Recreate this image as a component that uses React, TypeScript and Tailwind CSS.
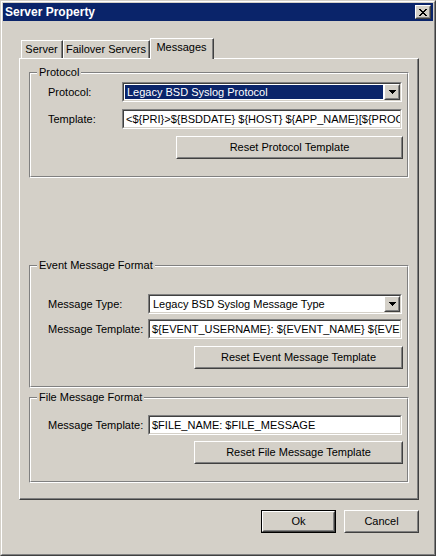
import React from 'react'

const font = "font-['Liberation_Sans',Arial,sans-serif]"

function Raised({ className = '', children }: { className?: string; children?: React.ReactNode }) {
  return (
    <div className={`border border-t-white border-l-white border-r-[#404040] border-b-[#404040] bg-[#d4d0c8] ${className}`}>
      <div className="h-full w-full border border-t-[#d4d0c8] border-l-[#d4d0c8] border-r-[#808080] border-b-[#808080] flex items-center justify-center">
        {children}
      </div>
    </div>
  )
}

function Sunken({ className = '', children }: { className?: string; children?: React.ReactNode }) {
  return (
    <div className={`border border-t-[#808080] border-l-[#808080] border-r-white border-b-white ${className}`}>
      <div className="h-full w-full border border-t-[#404040] border-l-[#404040] border-r-[#d4d0c8] border-b-[#d4d0c8] bg-white flex overflow-hidden">
        {children}
      </div>
    </div>
  )
}

function ArrowDown() {
  return (
    <svg width="7" height="4" viewBox="0 0 7 4" shapeRendering="crispEdges">
      <rect x="0" y="0" width="7" height="1" fill="#000" />
      <rect x="1" y="1" width="5" height="1" fill="#000" />
      <rect x="2" y="2" width="3" height="1" fill="#000" />
      <rect x="3" y="3" width="1" height="1" fill="#000" />
    </svg>
  )
}

function Combo({ value, selected, className }: { value: string; selected?: boolean; className: string }) {
  return (
    <Sunken className={className}>
      <div className="flex-1 p-[1px] flex">
        <div className={`flex-1 flex items-center pl-[2px] whitespace-nowrap ${selected ? 'bg-[#0a246a] text-white' : ''}`}>
          {value}
        </div>
      </div>
      <Raised className="w-[16px] h-full">
        <ArrowDown />
      </Raised>
    </Sunken>
  )
}

function TextBox({ value, className }: { value: string; className: string }) {
  return (
    <Sunken className={className}>
      <div className="flex items-center pl-[2px] whitespace-nowrap">{value}</div>
    </Sunken>
  )
}

function Button({ label, className }: { label: string; className: string }) {
  return <Raised className={className}>{label}</Raised>
}

function GroupBox({ title, className, children }: { title: string; className: string; children?: React.ReactNode }) {
  return (
    <div className={`relative w-[380px] border border-t-[#808080] border-l-[#808080] border-r-white border-b-white ${className}`}>
      <div className="h-full border border-t-white border-l-white border-r-[#808080] border-b-[#808080] pl-[17px] pr-[5px]">
        {children}
      </div>
      <div className="absolute -top-[7px] left-[7px] px-[2px] bg-[#d4d0c8] leading-[13px]">{title}</div>
    </div>
  )
}

function Tab({ label, active, className }: { label: string; active?: boolean; className: string }) {
  if (active) {
    return (
      <div className={`h-[21px] -mb-[1px] bg-[#d4d0c8] border-t border-l border-r border-t-white border-l-white border-r-[#404040] ${className}`}>
        <div className="h-full border-r border-r-[#808080] flex items-center justify-center pb-[3px]">{label}</div>
      </div>
    )
  }
  return (
    <div className={`h-[18px] border-t border-l border-r border-t-white border-l-white border-r-[#404040] ${className}`}>
      <div className="h-full border-r border-r-[#808080] flex items-center justify-center">{label}</div>
    </div>
  )
}

export default function App() {
  return (
    <div className={`${font} text-[11px] text-black w-[436px] h-[556px] bg-[#d4d0c8] border border-t-[#d4d0c8] border-l-[#d4d0c8] border-r-[#404040] border-b-[#404040]`}>
      <div className="h-full border border-t-white border-l-white border-r-[#808080] border-b-[#808080] p-[1px] flex flex-col">
        {/* Title bar */}
        <div className="h-[18px] bg-[#0a246a] flex items-center justify-between pl-[2px] pr-[2px]">
          <span className="text-white font-bold text-[12px] leading-none">Server Property</span>
          <Raised className="w-[16px] h-[14px]">
            <svg width="8" height="7" viewBox="0 0 8 7" shapeRendering="crispEdges">
              <rect x="0" y="0" width="2" height="1" />
              <rect x="6" y="0" width="2" height="1" />
              <rect x="1" y="1" width="2" height="1" />
              <rect x="5" y="1" width="2" height="1" />
              <rect x="2" y="2" width="4" height="1" />
              <rect x="3" y="3" width="2" height="1" />
              <rect x="2" y="4" width="4" height="1" />
              <rect x="1" y="5" width="2" height="1" />
              <rect x="5" y="5" width="2" height="1" />
              <rect x="0" y="6" width="2" height="1" />
              <rect x="6" y="6" width="2" height="1" />
            </svg>
          </Raised>
        </div>

        <div className="pt-[17px] pl-[16px] pr-[14px] flex flex-col">
          {/* Tabs */}
          <div className="flex items-end h-[20px] pl-[2px] relative z-10">
            <Tab label="Server" className="w-[42px]" />
            <Tab label="Failover Servers" className="w-[87px]" />
            <Tab label="Messages" active className="w-[64px]" />
          </div>

          {/* Tab panel */}
          <div className="w-[400px] h-[442px] border border-t-white border-l-white border-r-[#404040] border-b-[#404040]">
            <div className="h-full border-r border-b border-r-[#808080] border-b-[#808080] pl-[9px] pt-[13px] flex flex-col">
              <GroupBox title="Protocol" className="h-[106px]">
                <div className="flex h-[20px] mt-[8px] items-center">
                  <span className="w-[74px]">Protocol:</span>
                  <Combo value="Legacy BSD Syslog Protocol" selected className="w-[280px] h-[20px]" />
                </div>
                <div className="flex h-[20px] mt-[7px] items-center">
                  <span className="w-[74px]">Template:</span>
                  <TextBox value="<${PRI}>${BSDDATE} ${HOST} ${APP_NAME}[${PROC" className="w-[280px] h-[20px]" />
                </div>
                <div className="flex justify-end mt-[7px] -mr-[1px]">
                  <Button label="Reset Protocol Template" className="w-[227px] h-[23px]" />
                </div>
              </GroupBox>

              <GroupBox title="Event Message Format" className="h-[123px] mt-[87px]">
                <div className="flex h-[20px] mt-[27px] items-center">
                  <span className="w-[100px]">Message Type:</span>
                  <Combo value="Legacy BSD Syslog Message Type" className="w-[254px] h-[20px]" />
                </div>
                <div className="flex h-[20px] mt-[5px] items-center">
                  <span className="w-[100px]">Message Template:</span>
                  <TextBox value="${EVENT_USERNAME}: ${EVENT_NAME} ${EVEN" className="w-[254px] h-[20px]" />
                </div>
                <div className="flex justify-end mt-[7px] -mr-[1px]">
                  <Button label="Reset Event Message Template" className="w-[209px] h-[23px]" />
                </div>
              </GroupBox>

              <GroupBox title="File Message Format" className="h-[86px] mt-[9px]">
                <div className="flex h-[20px] mt-[16px] items-center">
                  <span className="w-[100px]">Message Template:</span>
                  <TextBox value="$FILE_NAME: $FILE_MESSAGE" className="w-[254px] h-[20px]" />
                </div>
                <div className="flex justify-end mt-[6px] -mr-[1px]">
                  <Button label="Reset File Message Template" className="w-[209px] h-[23px]" />
                </div>
              </GroupBox>
            </div>
          </div>

          {/* Dialog buttons */}
          <div className="flex justify-end gap-[8px] mt-[10px]">
            <div className="w-[75px] h-[23px] border border-black">
              <Raised className="w-full h-full">Ok</Raised>
            </div>
            <Button label="Cancel" className="w-[75px] h-[23px]" />
          </div>
        </div>
      </div>
    </div>
  )
}
